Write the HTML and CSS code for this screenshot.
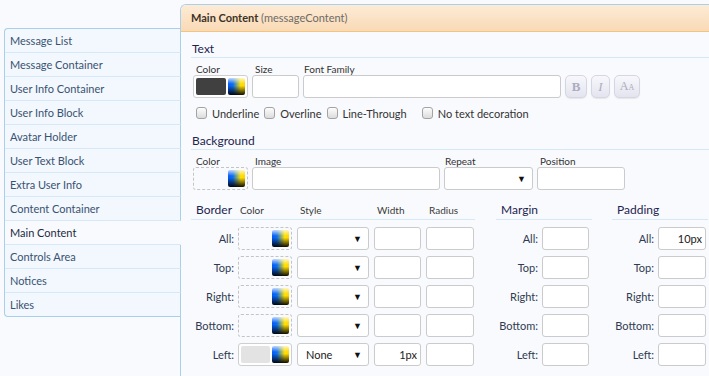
FILE: index.html
```html
<!DOCTYPE html>
<html>
<head>
<meta charset="utf-8">
<link rel="stylesheet" href="styles.css">
</head>
<body>
<div class="wrap">
  <ul class="side">
    <li>Message List</li>
    <li>Message Container</li>
    <li>User Info Container</li>
    <li>User Info Block</li>
    <li>Avatar Holder</li>
    <li>User Text Block</li>
    <li>Extra User Info</li>
    <li>Content Container</li>
    <li class="act">Main Content</li>
    <li>Controls Area</li>
    <li>Notices</li>
    <li class="last">Likes</li>
  </ul>
  <div class="panel">
    <div class="phead"><b>Main Content</b> <span>(messageContent)</span></div>
    <div class="pbody">
      <h3 class="sec">Text</h3>
      <div class="fields">
        <div class="fld"><label>Color</label><div class="cbox solid"><span class="sw dark"></span><span class="pick"></span></div></div>
        <div class="fld"><label>Size</label><div class="inp w47"></div></div>
        <div class="fld"><label>Font Family</label><div class="inp w258"></div></div>
        <div class="btns">
          <span class="btn b">B</span><span class="btn i">I</span><span class="btn a">A<small>A</small></span>
        </div>
      </div>
      <div class="checks">
        <span class="chk"><i></i>Underline</span>
        <span class="chk"><i></i>Overline</span>
        <span class="chk"><i></i>Line-Through</span>
        <span class="chk gap"><i></i>No text decoration</span>
      </div>
      <h3 class="sec bg">Background</h3>
      <div class="fields f2">
        <div class="fld"><label>Color</label><div class="cbox"><span class="sw"></span><span class="pick"></span></div></div>
        <div class="fld"><label>Image</label><div class="inp w188"></div></div>
        <div class="fld"><label>Repeat</label><div class="inp dd w89"><span></span><em>▼</em></div></div>
        <div class="fld"><label>Position</label><div class="inp w88"></div></div>
      </div>
      <div class="boxes">
        <div class="bsec">
          <div class="bhead grid">
            <span class="ttl">Border</span><span>Color</span><span>Style</span><span>Width</span><span>Radius</span>
          </div>
          <div class="brow grid"><label>All:</label><div class="cbox"><span class="sw"></span><span class="pick"></span></div><div class="inp dd"><span></span><em>▼</em></div><div class="inp"></div><div class="inp"></div></div>
          <div class="brow grid"><label>Top:</label><div class="cbox"><span class="sw"></span><span class="pick"></span></div><div class="inp dd"><span></span><em>▼</em></div><div class="inp"></div><div class="inp"></div></div>
          <div class="brow grid"><label>Right:</label><div class="cbox"><span class="sw"></span><span class="pick"></span></div><div class="inp dd"><span></span><em>▼</em></div><div class="inp"></div><div class="inp"></div></div>
          <div class="brow grid"><label>Bottom:</label><div class="cbox"><span class="sw"></span><span class="pick"></span></div><div class="inp dd"><span></span><em>▼</em></div><div class="inp"></div><div class="inp"></div></div>
          <div class="brow grid"><label>Left:</label><div class="cbox solid"><span class="sw light"></span><span class="pick"></span></div><div class="inp dd"><span>None</span><em>▼</em></div><div class="inp val">1px</div><div class="inp"></div></div>
        </div>
        <div class="msec">
          <div class="bhead"><span class="ttl">Margin</span></div>
          <div class="mrow"><label>All:</label><div class="inp"></div></div>
          <div class="mrow"><label>Top:</label><div class="inp"></div></div>
          <div class="mrow"><label>Right:</label><div class="inp"></div></div>
          <div class="mrow"><label>Bottom:</label><div class="inp"></div></div>
          <div class="mrow"><label>Left:</label><div class="inp"></div></div>
        </div>
        <div class="msec pad">
          <div class="bhead"><span class="ttl">Padding</span></div>
          <div class="mrow"><label>All:</label><div class="inp val">10px</div></div>
          <div class="mrow"><label>Top:</label><div class="inp"></div></div>
          <div class="mrow"><label>Right:</label><div class="inp"></div></div>
          <div class="mrow"><label>Bottom:</label><div class="inp"></div></div>
          <div class="mrow"><label>Left:</label><div class="inp"></div></div>
        </div>
      </div>
    </div>
  </div>
</div>
</body>
</html>
```
FILE: styles.css
```css
* { box-sizing: border-box; }
html, body { margin: 0; padding: 0; }
body {
  background: #f8fafd;
  font-family: "Lato", "Open Sans", sans-serif;
  font-size: 11px;
  color: #333a48;
  overflow: hidden;
  height: 376px;
}
.wrap {
  display: flex;
  align-items: flex-start;
  padding-top: 4px;
}
.side {
  list-style: none;
  margin: 24px -1px 0 4px;
  padding: 0;
  width: 177px;
  flex: none;
  position: relative;
  z-index: 2;
  border: 1px solid #a9cfe9;
  border-right: none;
  border-radius: 4px 0 0 4px;
  background: #f2f8fd;
}
.side li {
  height: 24px;
  line-height: 23px;
  padding-left: 5px;
  border-bottom: 1px solid #d5e9f8;
  border-right: 1px solid #a9cfe9;
  color: #3a5272;
}
.side li:first-child { border-top-left-radius: 4px; }
.side li.last { border-bottom: none; height: 23px; border-bottom-left-radius: 4px; }
.side li.act {
  background: #f9fafd;
  border-right-color: #f9fafd;
  color: #1d2b45;
}
.panel {
  flex: 1;
  height: 372px;
  border-left: 1px solid #a9cfe9;
  border-top: 1px solid #a9cfe9;
  border-top-left-radius: 6px;
  background: #f9fafd;
}
.phead {
  height: 27px;
  line-height: 25px;
  padding-left: 10px;
  background: linear-gradient(#fdebd6, #f9dab5);
  border-bottom: 1px solid #f3c47f;
  border-top-left-radius: 5px;
  font-size: 11px;
}
.phead b { font-weight: 700; color: #3d3326; }
.phead span { color: #6e6a66; }
.pbody { padding-left: 10px; }
.sec {
  margin: 9px 0 0;
  height: 17px;
  line-height: 16px;
  font-size: 12px;
  font-weight: 400;
  color: #1c2450;
  border-bottom: 1px solid #d5e8f6;
  padding-left: 1px;
}
.sec.bg { margin-top: 11px; }
.fields { display: flex; align-items: flex-end; margin-top: 5px; padding-left: 2px; }
.fld { display: flex; flex-direction: column; margin-right: 4px; }
.fld label { height: 12px; line-height: 12px; font-size: 10px; padding-left: 3px; color: #333; }
.fld:nth-child(3) label { padding-left: 1px; }
.inp {
  height: 23px;
  border: 1px solid #cbcbcb;
  border-radius: 3px;
  background: #fff;
}
.w47 { width: 47px; }
.w258 { width: 258px; }
.w188 { width: 188px; }
.w89 { width: 89px; }
.w88 { width: 88px; }
.dd {
  display: flex;
  align-items: center;
  justify-content: space-between;
  padding: 0 6px 0 8px;
}
.dd span { font-size: 11px; color: #222; }
.dd em { font-style: normal; font-size: 9px; color: #111; }
.val {
  text-align: right;
  line-height: 21px;
  padding-right: 3px;
  font-size: 11px;
  color: #222;
}
.cbox {
  width: 55px;
  height: 23px;
  border: 1px dashed #c4c4c4;
  border-radius: 3px;
  display: flex;
  align-items: center;
  padding: 0 2px;
  gap: 2px;
}
.cbox.solid { border-style: solid; background: #fff; border-color: #cfcfcf; }
.sw { width: 30px; height: 17px; border-radius: 2px; }
.sw.dark { background: #404040; }
.sw.light { background: #e3e3e3; }
.pick {
  width: 17px;
  height: 17px;
  border-radius: 2px;
  background:
    linear-gradient(to bottom, rgba(255,255,255,0.75) 0%, rgba(255,255,255,0) 35%, rgba(0,0,0,0) 45%, rgba(0,0,0,0.95) 100%),
    linear-gradient(to right, #0058ff 0%, #1070e8 30%, #ffe000 75%, #ffd400 100%);
}
.btns { display: flex; gap: 4px; margin-left: 0; }
.btn {
  height: 23px;
  border: 1px solid #d6d6e2;
  border-radius: 5px;
  background: linear-gradient(#f7f7fc, #e4e4ef);
  box-shadow: 0 1px 1px rgba(0,0,0,0.08);
  font-family: "Liberation Serif", serif;
  color: #acacbe;
  font-size: 13px;
  line-height: 21px;
  text-align: center;
}
.btn.b { width: 22px; font-weight: 700; }
.btn.i { width: 19px; font-style: italic; }
.btn.a { width: 26px; font-size: 12px; }
.btn.a small { font-size: 8px; }
.checks {
  display: flex;
  height: 18px;
  align-items: center;
  margin-top: 6px;
  padding-left: 5px;
}
.chk { display: flex; align-items: center; margin-right: 5px; color: #333; }
.chk i {
  width: 11px;
  height: 12px;
  border: 1px solid #a3a3a3;
  border-radius: 3px;
  background: linear-gradient(#fdfdfd, #dcdcdc);
  margin-right: 5px;
}
.chk.gap { margin-left: 10px; }
.f2 .fld { margin-right: 4px; }
.boxes { display: flex; margin-top: 12px; }
.bsec { width: 284px; }
.grid {
  display: grid;
  grid-template-columns: 42px 54px 72px 47px 48px;
  column-gap: 5px;
}
.grid > :first-child { margin-right: -1px; }
.bhead {
  height: 18px;
  border-bottom: 1px solid #d5e8f6;
  line-height: 16px;
  font-size: 10px;
  color: #3a3a3a;
  margin-bottom: 7px;
}
.bhead span { padding-left: 3px; }
.bhead .ttl { font-size: 12px; color: #1c2450; padding-left: 5px; }
.bsec .bhead span:nth-child(2) { padding-left: 2px; }
.brow { height: 23px; margin-bottom: 6px; align-items: center; }
.brow .inp { height: 23px; }
.brow label, .mrow label {
  text-align: right;
  font-size: 11px;
  color: #2f3b52;
}
.brow .cbox { width: 54px; }
.msec { width: 96px; margin-left: 21px; }
.msec.pad { margin-left: 20px; }
.mrow {
  display: flex;
  align-items: center;
  height: 23px;
  margin-bottom: 6px;
}
.mrow label { width: 42px; margin-right: 4px; }
.mrow .inp { width: 47px; }
.pad .mrow .inp { width: 48px; }
```
